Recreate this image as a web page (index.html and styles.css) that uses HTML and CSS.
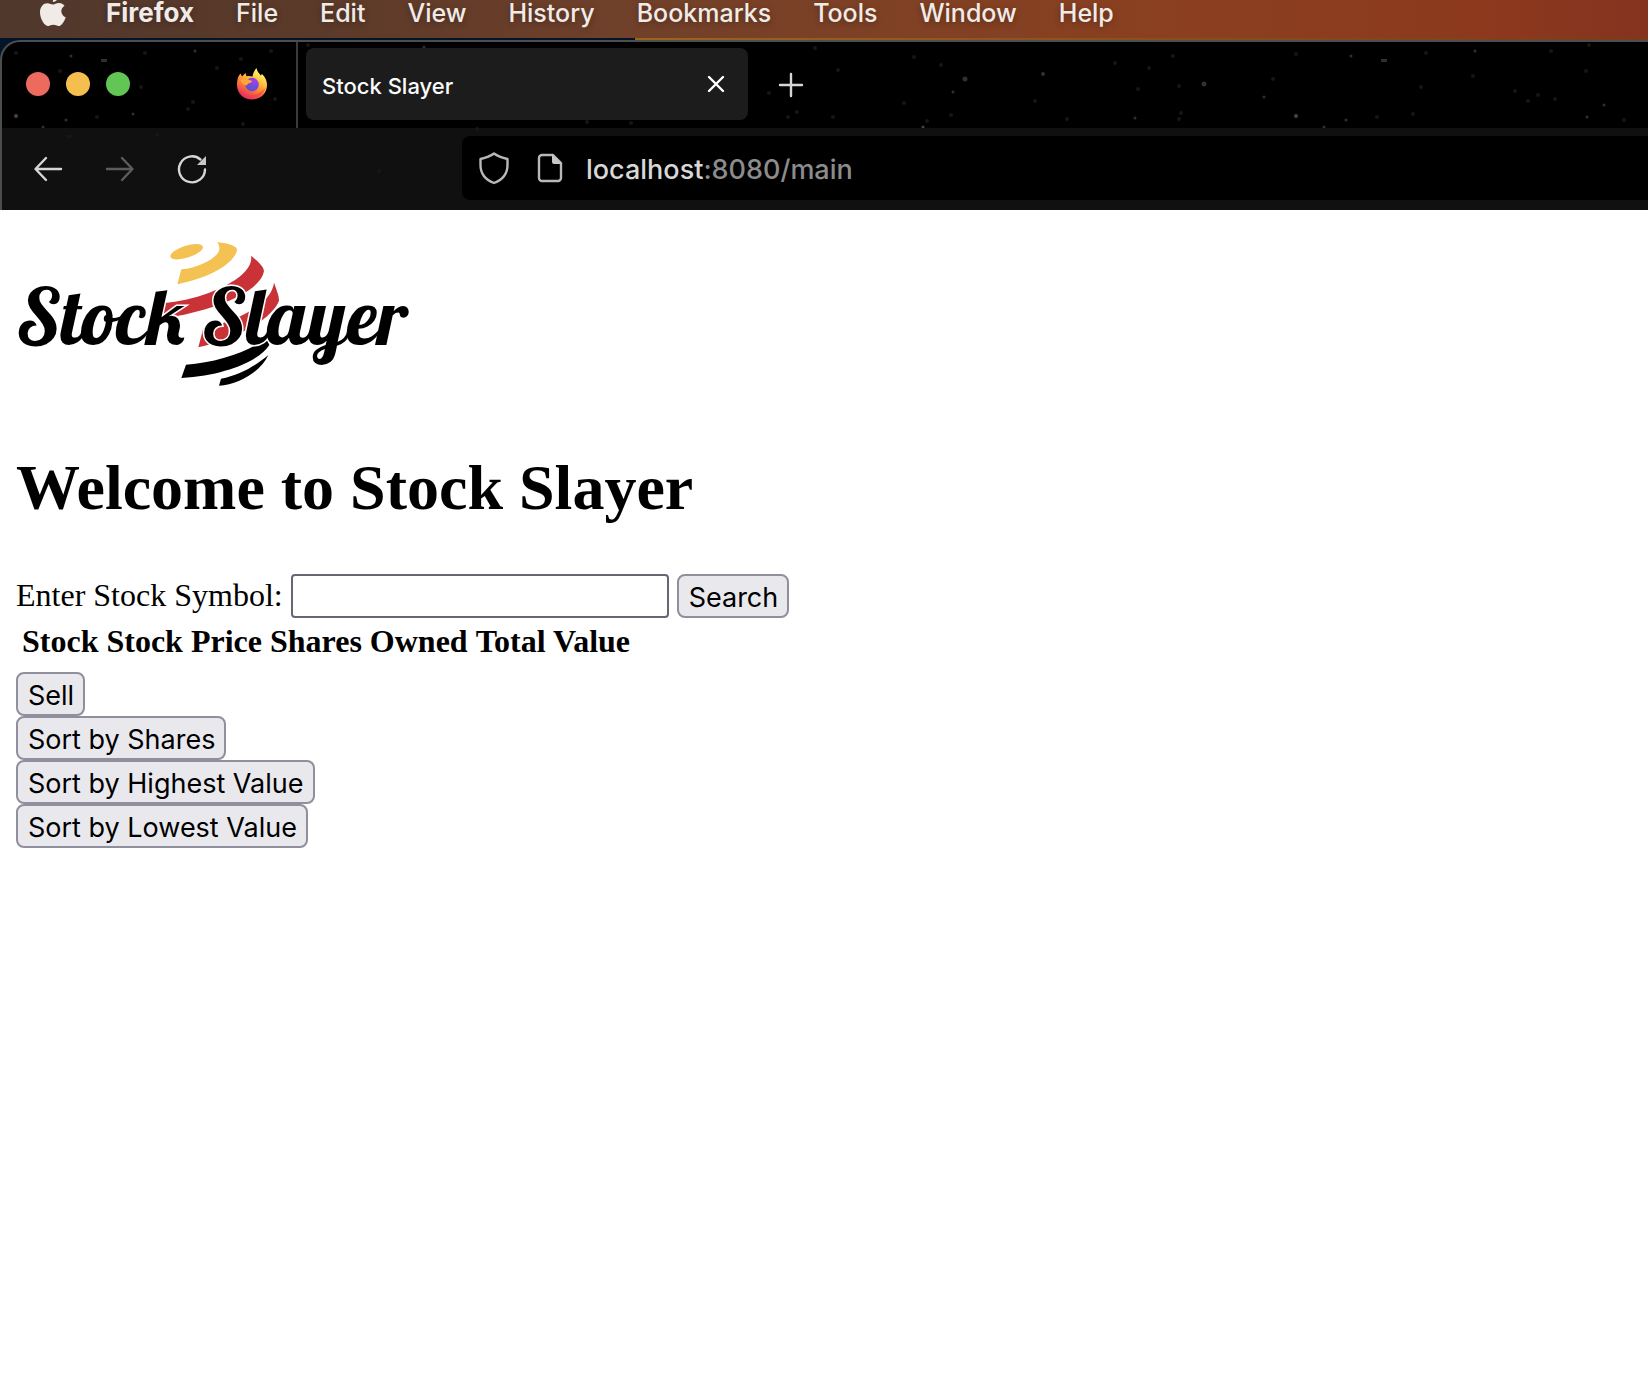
FILE: index.html
```html
<!DOCTYPE html>
<html lang="en">
<head>
<meta charset="utf-8">
<meta name="viewport" content="width=device-width, initial-scale=1">
<title>Stock Slayer</title>
<link rel="stylesheet" href="styles.css">
</head>
<body>
<nav class="menubar" aria-label="Menu bar">
  <svg class="apple" viewBox="0 0 24 30" width="24" height="30" aria-hidden="true"><path d="M13 6.500C15 6.500 16 5 19 5c2.400 0 4.400 1.200 5.500 2.800-4.800 3-4 9.700 1.200 11.600C24.200 23.500 21.500 28 18.600 28c-2 0-2.800-1.200-5.200-1.200S10 28 8.200 28C4.500 28 0 21 0 14.300 0 8.500 3.500 5.200 7.300 5.200c2.400 0 4.200 1.300 5.700 1.300zM12.800 4C12.800 1 15 -2 18.500-2.500 18.800.8 16 4 12.800 4z"/></svg>
  <span class="menu-app">Firefox</span>
  <span>File</span>
  <span>Edit</span>
  <span>View</span>
  <span>History</span>
  <span>Bookmarks</span>
  <span>Tools</span>
  <span>Window</span>
  <span>Help</span>
</nav>
<header class="browser">
  <div class="chrome">
    <svg class="stars" aria-hidden="true">
      <g fill="#303030"><rect x="101" y="59" width="6" height="3"/><rect x="1381" y="59" width="6" height="3"/><circle cx="195" cy="51" r="1.500"/><circle cx="71" cy="56" r="1.500"/><circle cx="66" cy="120" r="1.500"/><circle cx="43" cy="127" r="1.500"/><circle cx="133" cy="114" r="1.500"/><circle cx="424" cy="47" r="1.500"/><circle cx="965" cy="79" r="2.500"/><circle cx="1043" cy="74" r="2"/><circle cx="953" cy="92" r="1.500"/><circle cx="1204" cy="84" r="2.500"/><circle cx="1135" cy="118" r="1.500"/><circle cx="1264" cy="97" r="1.500"/><circle cx="1324" cy="127" r="1.500"/><circle cx="1346" cy="120" r="1.500"/><circle cx="1351" cy="56" r="1.500"/><circle cx="1475" cy="51" r="1.500"/><circle cx="1587" cy="117" r="1.500"/><circle cx="1604" cy="105" r="1.500"/></g>
      <g fill="#161616"><circle cx="16" cy="53" r="2"/><circle cx="145" cy="53" r="2"/><circle cx="271" cy="51" r="2"/><circle cx="60" cy="71" r="2"/><circle cx="241" cy="59" r="2"/><circle cx="217" cy="68" r="2"/><circle cx="97" cy="117" r="2"/><circle cx="141" cy="87" r="2"/><circle cx="275" cy="99" r="2"/><circle cx="193" cy="102" r="2"/><circle cx="188" cy="109" r="2"/><circle cx="243" cy="124" r="2"/><circle cx="308" cy="45" r="2"/><rect x="66" y="135" width="6" height="3"/><circle cx="157" cy="135" r="2"/><circle cx="587" cy="122" r="2"/><circle cx="631" cy="123" r="2"/><circle cx="477" cy="129" r="2"/><circle cx="815" cy="48" r="2"/><circle cx="838" cy="70" r="2"/><circle cx="769" cy="93" r="2"/><circle cx="797" cy="112" r="2"/><circle cx="833" cy="117" r="2"/><circle cx="788" cy="117" r="2"/><circle cx="914" cy="57" r="2"/><circle cx="941" cy="65" r="2"/><circle cx="1115" cy="63" r="2"/><circle cx="1149" cy="68" r="2"/><circle cx="1173" cy="56" r="2"/><circle cx="1179" cy="86" r="2"/><circle cx="1138" cy="89" r="2"/><circle cx="1035" cy="101" r="2"/><circle cx="1067" cy="119" r="2"/><circle cx="1181" cy="113" r="2"/><circle cx="1179" cy="119" r="2"/><circle cx="951" cy="115" r="2"/><circle cx="927" cy="121" r="2"/><circle cx="904" cy="103" r="2"/><circle cx="1273" cy="79" r="2"/><circle cx="1296" cy="54" r="2"/><circle cx="1377" cy="117" r="2"/><circle cx="1413" cy="114" r="2"/><circle cx="1426" cy="53" r="2"/><circle cx="1421" cy="87" r="2"/><circle cx="1473" cy="76" r="2"/><circle cx="1515" cy="91" r="2"/><circle cx="1538" cy="95" r="2"/><circle cx="1551" cy="51" r="2"/><circle cx="1586" cy="71" r="2"/><circle cx="1528" cy="101" r="2"/><circle cx="1555" cy="99" r="2"/><circle cx="1589" cy="45" r="2"/><circle cx="1624" cy="120" r="2"/><circle cx="379" cy="171" r="2"/></g>
      <g fill="#54403a"><circle cx="16" cy="116" r="2"/><circle cx="1296" cy="116" r="2"/><circle cx="923" cy="127" r="1.500"/></g>
    </svg>
    <div class="tabbar">
      <div class="pinned">
        <div class="lights">
          <button class="light light-close" aria-label="Close"></button>
          <button class="light light-minimize" aria-label="Minimize"></button>
          <button class="light light-zoom" aria-label="Zoom"></button>
        </div>
        <svg viewBox="0 0 32 32" width="32" height="32" aria-hidden="true">
          <defs>
            <linearGradient id="flame" x1="0.850" y1="0" x2="0.300" y2="1"><stop offset="0.150" stop-color="#fff164"/><stop offset="0.450" stop-color="#ffb03a"/><stop offset="0.720" stop-color="#fb6a3a"/><stop offset="1" stop-color="#dd2468"/></linearGradient>
            <radialGradient id="globe" cx="0.700" cy="0.200" r="0.900"><stop offset="0" stop-color="#a33fe6"/><stop offset="1" stop-color="#4f55cf"/></radialGradient>
          </defs>
          <path fill="url(#flame)" d="M1 17c0-4 .5-7 2-9.500L4.500 5.500 6 8.500 9.500 5l1 3.200c2-.4 4-.3 6 .3C17 5 18.500 2.500 20.500 0c.5 3.500 2.500 5 4.300 7.500l1.200-1.500c3.500 3 5 7 5 11C31 25.500 24.500 31.500 16 31.500S1 25.500 1 17z"/>
          <circle cx="16" cy="16.500" r="6.800" fill="url(#globe)"/>
          <path fill="#ffa436" d="M4.500 12c3-1.500 6-2 8.500-.3l3.200 1.300c-.2 1.500-2 1.800-3.200 2.200-1.500.5-1.500 1.800-2.700 2.300-2.500-.5-5-2.500-5.800-5.500z"/>
          <path fill="#f43b51" opacity=".6" d="M3 21c3 5 8 7 14 6 5-.7 9-3 12-7-1.500 7-7 10.500-13 10.500S4.500 27 3 21z"/>
        </svg>
      </div>
      <div class="tab">
        <span class="tab-title">Stock Slayer</span>
        <button class="icon-button" aria-label="Close tab"><svg viewBox="0 0 18 18" width="18" height="18"><path d="M2 2l14 14M16 2L2 16"/></svg></button>
      </div>
      <button class="icon-button new-tab" aria-label="New tab"><svg viewBox="0 0 26 26" width="26" height="26"><path d="M13 2v22M2 13h22"/></svg></button>
    </div>
    <div class="toolbar">
      <div class="history">
        <button class="icon-button" aria-label="Back"><svg viewBox="0 0 28 28" width="28" height="28"><path d="M27 14H2M12 3L1.500 14 12 25"/></svg></button>
        <button class="icon-button" aria-label="Forward" disabled><svg viewBox="0 0 28 28" width="28" height="28"><path d="M1 14h25M16 3l10.500 11L16 25"/></svg></button>
        <button class="icon-button" aria-label="Reload"><svg viewBox="0 0 28 28" width="28" height="28"><path d="M27 14.500A13 13 0 1 1 22.500 4.500"/><path class="solid" d="M28 1v9h-9z"/></svg></button>
      </div>
      <div class="urlbar">
        <svg viewBox="0 0 30 32" width="30" height="32" aria-hidden="true"><path d="M15 1.500C11 4.500 6 6 1.500 7v6C1.500 22 7 28 15 31c8-3 13.500-9 13.500-18V7C24 6 19 4.500 15 1.500z"/></svg>
        <svg viewBox="0 0 24 28" width="24" height="28" aria-hidden="true"><path d="M4 1h11l8 8v15a3 3 0 0 1-3 3H4a3 3 0 0 1-3-3V4a3 3 0 0 1 3-3z"/><path class="solid" d="M14 0l10 10H16a2 2 0 0 1-2-2z"/></svg>
        <div class="url" role="textbox" aria-label="Address">localhost<span class="url-rest">:8080/main</span></div>
      </div>
    </div>
  </div>
</header>
<main class="page">
  <svg class="logo" viewBox="16 226 400 180" width="400" height="180" role="img" aria-label="Stock Slayer">
    <g transform="translate(150 230) scale(.3333)">
      <ellipse cx="110" cy="65" rx="51" ry="18" transform="rotate(-18 110 65)" fill="#f4c153"/>
      <path fill="#f4c153" d="M201 37C225 38 262 46 261 60C256 90 205 137 82 163L94 118C150 114 208 80 208 57C208 48 206 42 201 37z"/>
      <g fill="#c93338"><path d="M303 77C318 90 342 108 342 124C330 190 180 245 40 265V219C170 208 315 140 303 77z"/><path d="M372 158C380 180 388 200 387 212C365 270 250 330 145 352L160 295C260 275 365 222 372 158z"/></g>
      <path d="M108 404C200 398 295 365 350 325L358 345C330 390 230 436 94 444zM355 375C335 420 270 465 207 467L213 446C270 435 320 405 355 375z"/>
    </g>
    <text class="logo-text" x="16" y="345">Stock Slayer</text>
  </svg>
  <h1>Welcome to Stock Slayer</h1>
  <form class="search">
    <label for="symbol">Enter Stock Symbol:</label>
    <input id="symbol" type="text">
    <button type="button">Search</button>
  </form>
  <table>
    <thead><tr><th>Stock</th><th>Stock Price</th><th>Shares Owned</th><th>Total Value</th></tr></thead>
  </table>
  <div class="actions">
    <button type="button">Sell</button>
    <button type="button">Sort by Shares</button>
    <button type="button">Sort by Highest Value</button>
    <button type="button">Sort by Lowest Value</button>
  </div>
</main>
</body>
</html>
```
FILE: styles.css
```css
* {
  box-sizing: border-box;
}

body {
  margin: 0;
  background: #fff;
  color: #000;
  font-family: "Liberation Serif", serif;
  font-size: 32px;
}

button {
  font-family: Inter, sans-serif;
}

.menubar {
  display: flex;
  align-items: center;
  gap: 42px;
  height: 38px;
  padding: 0 40px 12px;
  background: linear-gradient(90deg, #50382d 0, #5c3a29 20%, #70402a 38%, #7f4124 54%, #8b3f20 72%, #8c391e 90%, #85331f 100%);
  color: #f1ebe8;
  font: 500 25px/26px Inter, sans-serif;
  text-shadow: 0 2px 6px rgba(0, 0, 0, 0.3);
  white-space: nowrap;
}

.apple {
  flex: none;
  fill: #f1ebe8;
  overflow: visible;
}

.menu-app {
  font-size: 26px;
  font-weight: 700;
}

.browser {
  padding-top: 2px;
  background: linear-gradient(90deg, #04152a 0, #04152a 635px, #9a6420 635px, #7c3a1c 100%);
}

.chrome {
  position: relative;
  overflow: hidden;
  border: 2px solid #4c4e4e;
  border-width: 2px 0 0 2px;
  border-radius: 20px 0 0 0;
  background: #000;
}

.stars {
  position: absolute;
  inset: -42px 0 0 -2px;
  width: 100%;
  height: 250px;
}

.tabbar {
  display: flex;
  align-items: center;
  height: 86px;
}

.pinned {
  display: flex;
  align-items: center;
  justify-content: space-between;
  width: 296px;
  height: 100%;
  padding: 0 28px 2px 24px;
  border-right: 2px solid #3a3a3a;
}

.lights {
  display: flex;
  gap: 16px;
}

.light {
  width: 24px;
  height: 24px;
  padding: 0;
  border: 0;
  border-radius: 50%;
}

.light-close {
  background: #ed6a5f;
}

.light-minimize {
  background: #f5bf4f;
}

.light-zoom {
  background: #62c655;
}

.tab {
  display: flex;
  align-items: center;
  justify-content: space-between;
  width: 442px;
  height: 72px;
  margin: 0 0 2px 8px;
  padding: 0 23px 0 16px;
  border-radius: 8px;
  background: #1c1c1c;
  color: #fbfbfb;
  font: 500 22px/28px Inter, sans-serif;
}

.tab-title {
  padding-top: 4px;
}

.icon-button {
  display: flex;
  padding: 0;
  border: 0;
  background: none;
}

.icon-button svg,
.urlbar svg {
  flex: none;
  fill: none;
  stroke: #d6d6d6;
  stroke-width: 2.4;
  stroke-linecap: round;
  stroke-linejoin: round;
  overflow: visible;
}

.tab svg {
  stroke: #fff;
}

.icon-button:disabled svg {
  stroke: #5c5c5c;
}

.icon-button .solid,
.urlbar .solid {
  fill: #c8c8c8;
  stroke: none;
}

.new-tab {
  margin-left: 30px;
}

.toolbar {
  display: flex;
  align-items: center;
  height: 82px;
  background: rgba(23, 23, 23, 0.7);
  position: relative;
}

.history {
  display: flex;
  gap: 44px;
  width: 460px;
  padding-left: 32px;
}

.urlbar {
  display: flex;
  flex: 1;
  align-items: center;
  height: 64px;
  margin-bottom: 2px;
  padding-left: 17px;
  border-radius: 8px 0 0 8px;
  background: #000;
}

.urlbar svg {
  margin-right: 29px;
  stroke: #b8b8b8;
}

.urlbar svg + svg {
  margin-right: 24px;
}

.url {
  padding-top: 3px;
  color: #d8d8d8;
  font: 500 27px/36px Inter, sans-serif;
}

.url-rest {
  color: #8c8c8c;
}

.page {
  padding: 16px;
}

.logo {
  display: block;
}

.logo-text {
  fill: #000;
  stroke: #fff;
  stroke-width: 3px;
  paint-order: stroke;
  font: 400 79px Lobster, "Liberation Serif", serif;
}

h1 {
  margin: 46px 0 50px;
  font-size: 64px;
  line-height: 72px;
}

.search {
  display: flex;
  align-items: center;
  gap: 8px;
}

.search label {
  padding-bottom: 2px;
  line-height: 42px;
}

.search input {
  width: 378px;
  height: 44px;
  padding: 2px 4px;
  border: 2px solid #676774;
  border-radius: 4px;
  background: #fff;
  font: 26px Inter, sans-serif;
}

.search button,
.actions button {
  height: 44px;
  padding: 3px 9px 0 10px;
  border: 2px solid #8f8f9d;
  border-radius: 8px;
  background: #e9e9ed;
  color: #000;
  font-size: 27px;
  line-height: 37px;
}

table {
  margin-bottom: 6px;
  border-spacing: 4px;
}

th {
  padding: 1px 2px 3px;
  line-height: 36px;
}

.actions {
  display: flex;
  flex-direction: column;
  align-items: flex-start;
}
```
